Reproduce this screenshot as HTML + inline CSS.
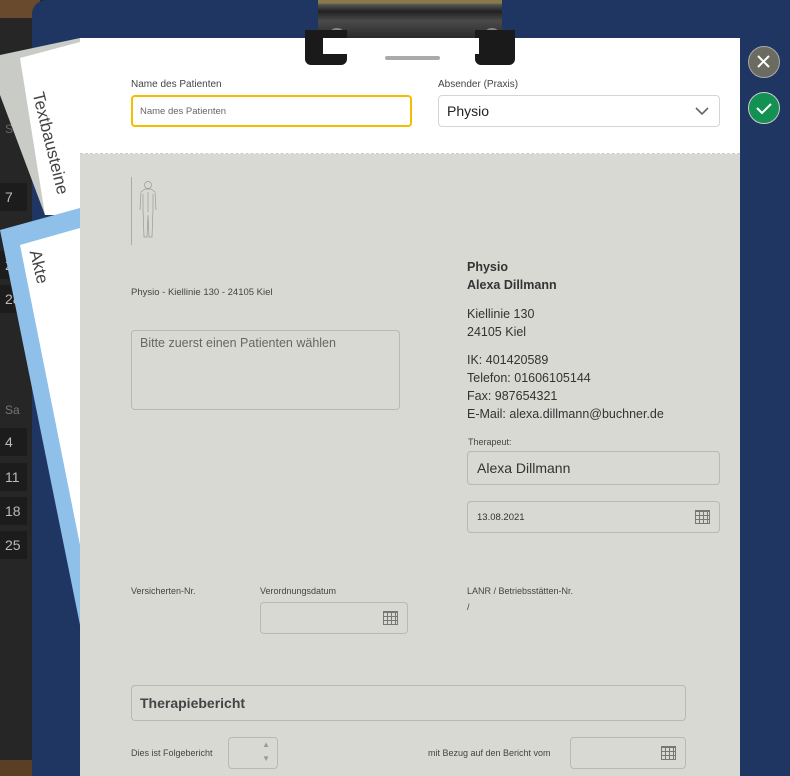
<!DOCTYPE html>
<html><head><meta charset="utf-8"><style>
*{box-sizing:border-box;margin:0;padding:0}
body{width:790px;height:776px;overflow:hidden;position:relative;background:#262626;font-family:"Liberation Sans",sans-serif;color:#333}
.abs{position:absolute}
.cal{position:absolute;left:0;width:27px;height:28px;background:#1c1c1c;color:#bbb;font-size:14px;line-height:28px;padding-left:5px}
.board{left:32px;top:0;width:760px;height:776px;background:#1f3562;border-radius:14px 0 0 0}
.paper{left:80px;top:38px;width:660px;height:738px;background:#d9d9d4}
.top{left:80px;top:38px;width:660px;height:116px;background:#fff;border-bottom:1px dashed #ccc}
.lbl{position:absolute;font-size:10px;color:#444}
.inp{position:absolute;border:1px solid #b9b9b4;border-radius:4px}
.cali{position:absolute;width:15px;height:14px;border:1.5px solid #777;background:repeating-linear-gradient(90deg,transparent 0 3px,#777 3px 4px),repeating-linear-gradient(0deg,transparent 0 3px,#777 3px 4px)}
</style></head><body>
<div class="abs" style="left:0;top:0;width:40px;height:18px;background:#6a4a2c"></div>
<div class="abs" style="left:0;top:760px;width:40px;height:16px;background:#5a3f25"></div>
<div class="cal" style="top:115px;background:none;color:#666;font-size:12px">S</div>
<div class="cal" style="top:183px">7</div>
<div class="cal" style="top:251px">2</div>
<div class="cal" style="top:285px">28</div>
<div class="cal" style="top:396px;background:none;color:#777;font-size:12px">Sa</div>
<div class="cal" style="top:428px">4</div>
<div class="cal" style="top:463px">11</div>
<div class="cal" style="top:497px">18</div>
<div class="cal" style="top:531px">25</div>
<div class="abs board"></div>
<div class="abs" style="left:0;top:0;width:90px;height:776px;background:#c9cbc6;clip-path:polygon(0 55px,80px 38px,80px 215px,45px 215px,0 95px)"></div>
<div class="abs" style="left:0;top:0;width:90px;height:776px;background:#fff;clip-path:polygon(20px 58px,80px 42px,80px 215px,45px 215px)"></div>
<div class="abs" style="top:90px;transform:rotate(76deg);transform-origin:0 0;font-size:17px;color:#444;font-weight:300;white-space:nowrap;left:47px">Textbausteine</div>
<div class="abs" style="left:0;top:0;width:90px;height:776px;background:#8ec0ea;clip-path:polygon(0 230px,80px 208px,80px 625px)"></div>
<div class="abs" style="left:0;top:0;width:90px;height:776px;background:#fff;clip-path:polygon(20px 245px,80px 228px,80px 545px)"></div>
<div class="abs" style="left:44px;top:248px;transform:rotate(76deg);transform-origin:0 0;font-size:17px;color:#444;font-weight:300">Akte</div>
<div class="abs paper"></div>
<div class="abs top"></div>
<div class="lbl" style="left:131px;top:79px">Name des Patienten</div>
<div class="inp" style="left:131px;top:95px;width:281px;height:32px;border:2px solid #f5bd00;background:#fff;font-size:9.5px;color:#666;padding:9px 7px">Name des Patienten</div>
<div class="lbl" style="left:438px;top:79px">Absender (Praxis)</div>
<div class="inp" style="left:438px;top:95px;width:282px;height:32px;border-color:#d5d5d5;background:#fff;font-size:14px;color:#222;padding:7px 8px">Physio
<svg class="abs" style="right:10px;top:11px" width="14" height="9"><path d="M1 1l6 6 6-6" stroke="#666" stroke-width="1.6" fill="none"/></svg></div>
<div class="abs" style="left:305px;top:0;width:210px;height:66px">
<div class="abs" style="left:13px;top:0;width:184px;height:38px;background:linear-gradient(#8a7a4a 0,#8a7a4a 8%,#555 12%,#222 30%,#4a4a4a 55%,#2a2a2a 100%);border-radius:0 0 4px 4px"></div>
<div class="abs" style="left:25px;top:28px;width:14px;height:10px;border-radius:50%;background:#888"></div>
<div class="abs" style="left:180px;top:28px;width:14px;height:10px;border-radius:50%;background:#888"></div>
<div class="abs" style="left:0;top:30px;width:42px;height:35px;background:#1a1a1a;border-radius:0 0 6px 6px"></div>
<div class="abs" style="left:170px;top:30px;width:40px;height:35px;background:#1a1a1a;border-radius:0 0 6px 6px"></div>
<div class="abs" style="left:18px;top:38px;width:156px;height:16px;background:#fff"></div>
<div class="abs" style="left:80px;top:56px;width:55px;height:4px;background:#aaa;border-radius:3px"></div>
</div>
<div class="abs" style="left:748px;top:46px;width:32px;height:32px;border-radius:50%;background:#6b6b62;border:1.5px solid #aaa"><svg width="29" height="29"><path d="M9 9l11 11M20 9L9 20" stroke="#fff" stroke-width="2"/></svg></div>
<div class="abs" style="left:748px;top:92px;width:32px;height:32px;border-radius:50%;background:#139152;border:1.5px solid #ccc"><svg width="29" height="29"><path d="M8 15l5 5 9-9" stroke="#fff" stroke-width="2" fill="none"/></svg></div>
<div class="abs" style="left:131px;top:177px;width:1px;height:68px;background:#aaa"></div>
<svg class="abs" style="left:136px;top:180px" width="24" height="60"><g stroke="#999" fill="none" stroke-width=".7"><circle cx="12" cy="5" r="3.5"/><path d="M9 9h6l4 3 1 18M9 9l-4 3-1 18M7 14v16l1 27h3l1-22 1 22h3l1-27V14M12 12v20"/></g></svg>
<div class="lbl" style="left:131px;top:287px;font-size:9.5px">Physio - Kiellinie 130 - 24105 Kiel</div>
<div class="inp" style="left:131px;top:330px;width:269px;height:80px;font-size:12.5px;color:#666;padding:5px 8px">Bitte zuerst einen Patienten wählen</div>
<div class="abs" style="left:467px;top:258px;font-size:12.5px;line-height:18px;color:#333"><b>Physio<br>Alexa Dillmann</b></div>
<div class="abs" style="left:467px;top:305px;font-size:12.5px;line-height:18px;color:#333">Kiellinie 130<br>24105 Kiel</div>
<div class="abs" style="left:467px;top:351px;font-size:12.5px;line-height:18px;color:#333">IK: 401420589<br>Telefon: 01606105144<br>Fax: 987654321<br>E-Mail: alexa.dillmann@buchner.de</div>
<div class="lbl" style="left:468px;top:437px;font-size:9px">Therapeut:</div>
<div class="inp" style="left:467px;top:451px;width:253px;height:34px;font-size:14px;padding:8px 9px">Alexa Dillmann</div>
<div class="inp" style="left:467px;top:501px;width:253px;height:32px;font-size:9.5px;padding:10px 9px">13.08.2021<div class="cali" style="right:9px;top:8px"></div></div>
<div class="lbl" style="left:131px;top:586px;font-size:9px">Versicherten-Nr.</div>
<div class="lbl" style="left:260px;top:586px;font-size:9px">Verordnungsdatum</div>
<div class="inp" style="left:260px;top:602px;width:148px;height:32px"><div class="cali" style="right:9px;top:8px"></div></div>
<div class="lbl" style="left:467px;top:586px;font-size:9px">LANR / Betriebsstätten-Nr.</div>
<div class="lbl" style="left:467px;top:602px;font-size:9px">/</div>
<div class="inp" style="left:131px;top:685px;width:555px;height:36px;font-size:14px;font-weight:bold;color:#444;padding:9px 8px">Therapiebericht</div>
<div class="lbl" style="left:131px;top:748px;font-size:9px">Dies ist Folgebericht</div>
<div class="inp" style="left:228px;top:737px;width:50px;height:32px;font-size:8px;color:#999"><span class="abs" style="right:7px;top:2px">▲</span><span class="abs" style="right:7px;top:16px">▼</span></div>
<div class="lbl" style="left:428px;top:748px;font-size:9px">mit Bezug auf den Bericht vom</div>
<div class="inp" style="left:570px;top:737px;width:116px;height:32px"><div class="cali" style="right:9px;top:8px"></div></div>
</body></html>
